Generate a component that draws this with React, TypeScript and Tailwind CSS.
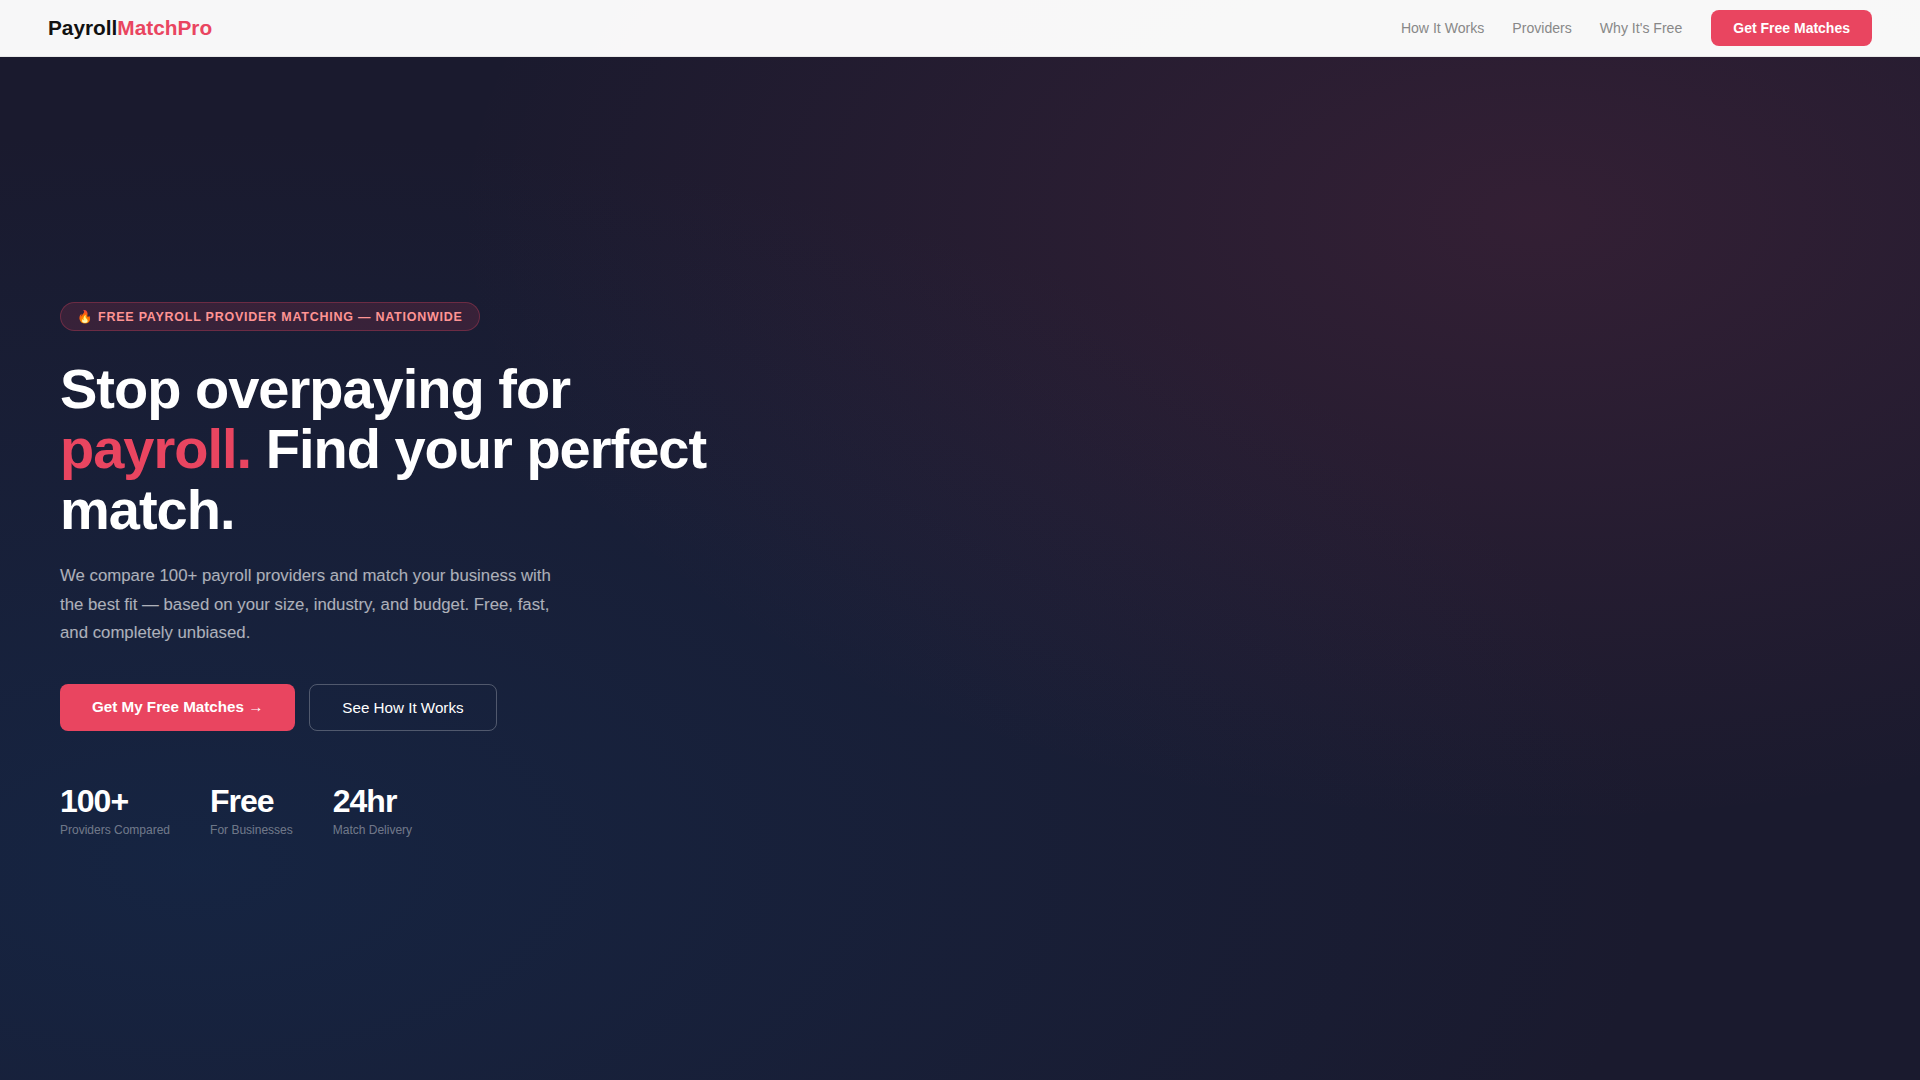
const stats = [
  ['100+', 'Providers Compared'],
  ['Free', 'For Businesses'],
  ['24hr', 'Match Delivery'],
];

export default function App() {
  return (
    <div className="flex h-[1080px] flex-col overflow-hidden bg-[#1a1a2e] bg-[radial-gradient(ellipse_at_80%_20%,rgba(233,69,96,0.12)_0%,transparent_50%),radial-gradient(ellipse_at_10%_80%,rgba(15,52,96,0.4)_0%,transparent_60%)] font-['Liberation_Sans',sans-serif]">
      <nav className="flex h-[57px] shrink-0 items-center justify-between border-b border-[#e8e8e8] bg-white/97 px-12">
        <div className="text-[20.8px] font-bold text-[#111]">
          Payroll<span className="text-[#e94560]">MatchPro</span>
        </div>
        <div className="flex items-center gap-7 text-[14.08px] leading-5 text-[#888]">
          <a>How It Works</a>
          <a>Providers</a>
          <a>Why It's Free</a>
          <a className="ml-px rounded-lg bg-[#e94560] px-[22px] py-2 text-[14px] leading-5 font-semibold text-white">Get Free Matches</a>
        </div>
      </nav>
      <main className="flex flex-1 flex-col items-start px-[60px] pt-[245px]">
        <div className="mb-7 flex h-[29px] items-center rounded-full border border-[#e94560]/30 bg-[#e94560]/15 px-4 pt-px text-[12.48px] leading-[15px] font-semibold tracking-[0.78px] text-[#ff9494] uppercase">
          🔥 Free Payroll Provider Matching — Nationwide
        </div>
        <h1 className="mb-[21.6px] w-[680px] text-[56px] leading-[1.08] font-bold tracking-[-1px] text-white">
          Stop overpaying for <span className="text-[#e94560]">payroll.</span> Find your perfect match.
        </h1>
        <p className="mb-9 w-[500px] text-[16.8px] leading-[1.7] text-white/65">
          We compare 100+ payroll providers and match your business with the best fit — based on your size, industry, and budget. Free, fast, and completely unbiased.
        </p>
        <div className="mb-[52px] flex h-[47px] gap-3.5 text-[15.2px] leading-[17px] text-white">
          <a className="rounded-lg bg-[#e94560] px-8 py-3.5 font-semibold">Get My Free Matches →</a>
          <a className="rounded-lg border border-white/25 px-8 py-3.5">See How It Works</a>
        </div>
        <div className="flex gap-10">
          {stats.map(([value, label]) => (
            <div key={label}>
              <div className="text-[32px] leading-[37px] font-bold tracking-[-1px] text-white">{value}</div>
              <div className="mt-[3px] text-[12px] leading-[14px] text-white/40">{label}</div>
            </div>
          ))}
        </div>
      </main>
    </div>
  );
}
